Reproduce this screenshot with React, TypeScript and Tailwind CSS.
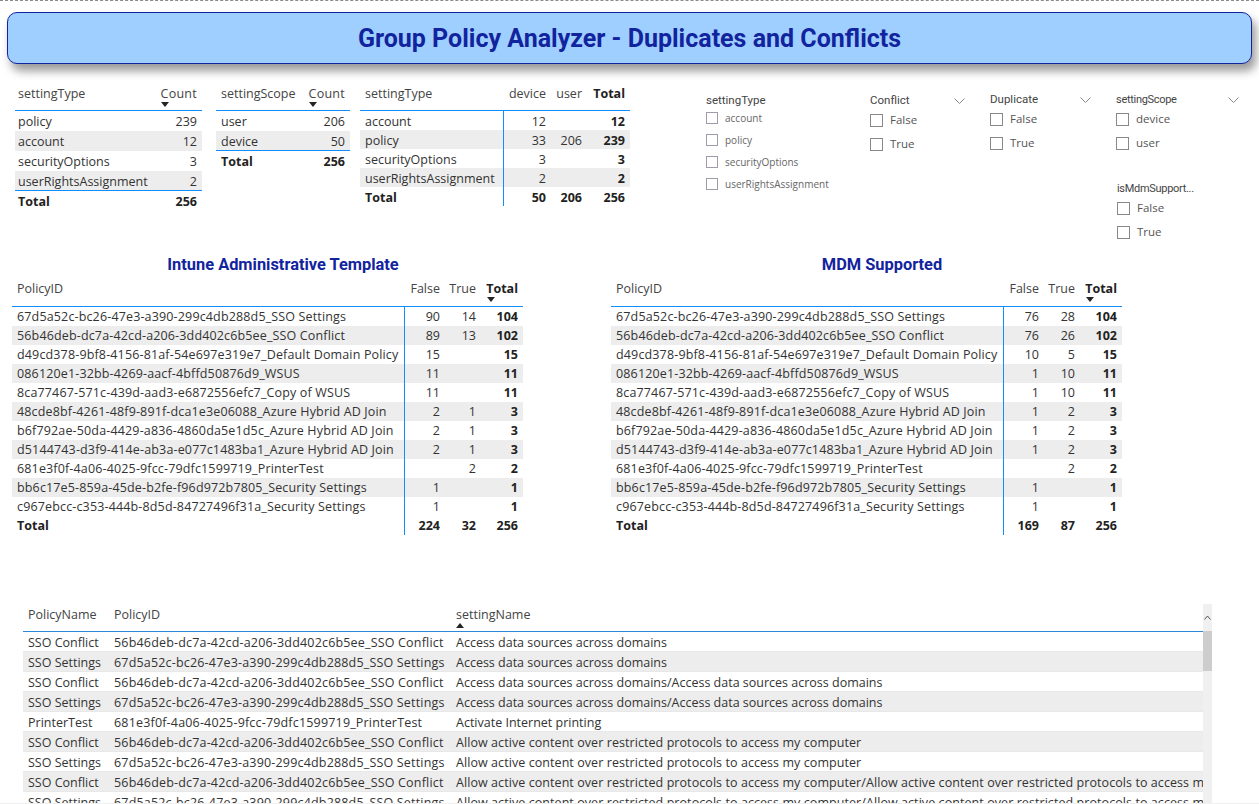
const sans = "font-['Open_Sans','Liberation_Sans',sans-serif]"

function SortArrow({ up }: { up?: boolean }) {
  return (
    <svg width="8" height="5" viewBox="0 0 8 5" className="absolute left-0 top-[17px]">
      <path d={up ? 'M0 5 L4 0 L8 5 Z' : 'M0 0 L4 5 L8 0 Z'} fill="#252423" />
    </svg>
  )
}

function Chevron() {
  return (
    <svg width="11" height="6" viewBox="0 0 11 6" fill="none" stroke="#8a8886" strokeWidth="1">
      <path d="M0.5 0.5 L5.5 5.5 L10.5 0.5" />
    </svg>
  )
}

function SmallList({ title, items }: { title: string; items: string[] }) {
  return (
    <div className="ml-[76px] w-[164px] pt-[10px]">
      <div className="h-[15px] font-['Roboto',sans-serif] text-[11.5px] leading-[16px] text-[#444]">{title}</div>
      {items.map((item) => (
        <div key={item} className="h-[22px] flex items-center gap-[7px] text-[10px] text-[#666]">
          <span className="w-[12px] h-[12px] border border-[#a09aa9] shrink-0" />
          <span>{item}</span>
        </div>
      ))}
    </div>
  )
}

function Slicer({ title, items, chevron, width, titleClass = 'text-[11.5px]' }: { title: string; items: string[]; chevron?: boolean; width?: string; titleClass?: string }) {
  return (
    <div className={width}>
      <div className={`h-[18px] flex items-center justify-between font-['Roboto',sans-serif] text-[#444] ${titleClass}`}>
        <span>{title}</span>
        {chevron && <Chevron />}
      </div>
      <div className="-mt-[2px]">
        {items.map((item) => (
          <div key={item} className="h-[24px] flex items-center gap-[7px] text-[11.5px] text-[#555]">
            <span className="w-[13px] h-[13px] border border-[#8a8886] shrink-0" />
            <span>{item}</span>
          </div>
        ))}
      </div>
    </div>
  )
}

function SimpleTable({ width, first, rows, pad }: { width: string; first: string; rows: [string, string][]; pad: string }) {
  return (
    <div className={`${width} text-[12.5px] text-[#333]`}>
      <div className={`h-[29px] border-b border-[#118dff] flex justify-between ${pad} pr-[5px] pt-[3px] text-[#444] leading-[18px]`}>
        <span>{first}</span>
        <span className="relative tracking-[0.25px]">Count<SortArrow /></span>
      </div>
      {rows.map(([k, v], i) => (
        <div key={k} className={`h-[20px] flex justify-between items-center ${pad} pr-[5px] ${i % 2 ? 'bg-[#ededed]' : ''} ${i === rows.length - 1 ? 'border-b border-[#118dff] pt-[3px]' : 'pt-[2px]'}`}>
          <span>{k}</span>
          <span>{v}</span>
        </div>
      ))}
      <div className={`h-[20px] flex justify-between items-center pt-[2px] ${pad} pr-[5px] font-bold text-[#222]`}>
        <span>Total</span>
        <span>256</span>
      </div>
    </div>
  )
}

const scopeRows = [
  ['account', '12', '', '12'],
  ['policy', '33', '206', '239'],
  ['securityOptions', '3', '', '3'],
  ['userRightsAssignment', '2', '', '2'],
]

function ScopeMatrix() {
  return (
    <div className="ml-[10px] w-[270px] text-[12.5px] text-[#333]">
      <div className="h-[29px] border-b border-[#118dff] flex px-[5px] pt-[3px] leading-[18px] text-[#444]">
        <span className="w-[138px]">settingType</span>
        <span className="w-[43px] text-right">device</span>
        <span className="w-[36px] text-right">user</span>
        <span className="w-[43px] text-right font-bold text-[#222]">Total</span>
      </div>
      <div className="relative">
        <div className="absolute left-[143px] top-0 bottom-0 w-px bg-[#118dff]" />
        {scopeRows.map((r, i) => (
          <div key={r[0]} className={`h-[19px] flex items-center pt-[3px] px-[5px] ${i % 2 ? 'bg-[#ededed]' : ''}`}>
            <span className="w-[138px]">{r[0]}</span>
            <span className="w-[43px] text-right">{r[1]}</span>
            <span className="w-[36px] text-right">{r[2]}</span>
            <span className="w-[43px] text-right font-bold text-[#222]">{r[3]}</span>
          </div>
        ))}
        <div className="h-[19px] flex items-center pt-[3px] px-[5px] font-bold text-[#222]">
          <span className="w-[138px]">Total</span>
          <span className="w-[43px] text-right">50</span>
          <span className="w-[36px] text-right">206</span>
          <span className="w-[43px] text-right">256</span>
        </div>
      </div>
    </div>
  )
}

const ids = [
  '67d5a52c-bc26-47e3-a390-299c4db288d5_SSO Settings',
  '56b46deb-dc7a-42cd-a206-3dd402c6b5ee_SSO Conflict',
  'd49cd378-9bf8-4156-81af-54e697e319e7_Default Domain Policy',
  '086120e1-32bb-4269-aacf-4bffd50876d9_WSUS',
  '8ca77467-571c-439d-aad3-e6872556efc7_Copy of WSUS',
  '48cde8bf-4261-48f9-891f-dca1e3e06088_Azure Hybrid AD Join',
  'b6f792ae-50da-4429-a836-4860da5e1d5c_Azure Hybrid AD Join',
  'd5144743-d3f9-414e-ab3a-e077c1483ba1_Azure Hybrid AD Join',
  '681e3f0f-4a06-4025-9fcc-79dfc1599719_PrinterTest',
  'bb6c17e5-859a-45de-b2fe-f96d972b7805_Security Settings',
  'c967ebcc-c353-444b-8d5d-84727496f31a_Security Settings',
]
const totals = ['104', '102', '15', '11', '11', '3', '3', '3', '2', '1', '1']
const intune = [['90', '14'], ['89', '13'], ['15', ''], ['11', ''], ['11', ''], ['2', '1'], ['2', '1'], ['2', '1'], ['', '2'], ['1', ''], ['1', '']]
const mdm = [['76', '28'], ['76', '26'], ['10', '5'], ['1', '10'], ['1', '10'], ['1', '2'], ['1', '2'], ['1', '2'], ['', '2'], ['1', ''], ['1', '']]

function PolicyMatrix({ title, counts, sums, className }: { title: string; counts: string[][]; sums: string[]; className: string }) {
  return (
    <div className={`w-[511px] text-[12.5px] text-[#333] ${className}`}>
      <div className="h-[24px] pl-[31px] text-center font-['Roboto',sans-serif] font-bold text-[16.4px] leading-[24px] text-[#12239e]">{title}</div>
      <div className="h-[30px] border-b border-[#118dff] flex items-start px-[5px] pt-[3px] text-[#444] leading-[18px]">
        <span className="w-[388px]">PolicyID</span>
        <span className="w-[35px] text-right">False</span>
        <span className="w-[36px] text-right">True</span>
        <span className="w-[42px] text-right font-bold text-[#222] relative">
          Total
          <span className="absolute left-[11px] top-0 w-[8px]"><SortArrow /></span>
        </span>
      </div>
      <div className="relative">
        <div className="absolute left-[392px] top-0 bottom-0 w-px bg-[#118dff]" />
        {ids.map((id, i) => (
          <div key={id} className={`h-[19px] flex items-center pt-[2px] px-[5px] ${i % 2 ? 'bg-[#ededed]' : ''}`}>
            <span className="w-[388px] whitespace-nowrap tracking-[0.15px]">{id}</span>
            <span className="w-[35px] text-right">{counts[i][0]}</span>
            <span className="w-[36px] text-right">{counts[i][1]}</span>
            <span className="w-[42px] text-right font-bold text-[#222]">{totals[i]}</span>
          </div>
        ))}
        <div className="h-[19px] flex items-center pt-[2px] px-[5px] font-bold text-[#222]">
          <span className="w-[388px]">Total</span>
          <span className="w-[35px] text-right">{sums[0]}</span>
          <span className="w-[36px] text-right">{sums[1]}</span>
          <span className="w-[42px] text-right">256</span>
        </div>
      </div>
    </div>
  )
}

const conflict = ['SSO Conflict', '56b46deb-dc7a-42cd-a206-3dd402c6b5ee_SSO Conflict']
const settings = ['SSO Settings', '67d5a52c-bc26-47e3-a390-299c4db288d5_SSO Settings']
const printer = ['PrinterTest', '681e3f0f-4a06-4025-9fcc-79dfc1599719_PrinterTest']
const a1 = 'Access data sources across domains'
const a2 = 'Access data sources across domains/Access data sources across domains'
const b1 = 'Allow active content over restricted protocols to access my computer'
const b2 = 'Allow active content over restricted protocols to access my computer/Allow active content over restricted protocols to access my computer'
const detail = [
  [...conflict, a1],
  [...settings, a1],
  [...conflict, a2],
  [...settings, a2],
  [...printer, 'Activate Internet printing'],
  [...conflict, b1],
  [...settings, b1],
  [...conflict, b2],
  [...settings, b2],
]

function DetailTable() {
  return (
    <div className="ml-[23px] mt-[69px] flex h-[199px] overflow-hidden text-[12.5px] text-[#333]">
      <div className="w-[1180px]">
        <div className="h-[28px] border-b border-[#2b88d8] flex px-[5px] pt-[2px] leading-[18px] text-[#444]">
          <span className="w-[86px]">PolicyName</span>
          <span className="w-[342px]">PolicyID</span>
          <span className="relative">settingName<SortArrow up /></span>
        </div>
        {detail.map((r, i) => (
          <div key={i} className={`h-[20px] flex items-center pt-[3px] px-[5px] whitespace-nowrap overflow-hidden border-b border-[#e8e8e8] ${i % 2 ? 'bg-[#ededed]' : ''}`}>
            <span className="w-[86px] shrink-0">{r[0]}</span>
            <span className="w-[342px] shrink-0 tracking-[0.18px]">{r[1]}</span>
            <span className={r[2].startsWith('Allow') ? 'tracking-[0.07px]' : ''}>{r[2]}</span>
          </div>
        ))}
      </div>
      <div className="w-[9px] bg-[#f0f0f0]">
        <div className="h-[27px] flex items-center justify-center">
          <svg width="7" height="5" viewBox="0 0 7 5" fill="none" stroke="#555" strokeWidth="1">
            <path d="M0.5 4.5 L3.5 1 L6.5 4.5" />
          </svg>
        </div>
        <div className="h-[40px] bg-[#cdcdcd]" />
      </div>
    </div>
  )
}

export default function App() {
  return (
    <div className={`w-[1259px] h-[804px] overflow-hidden bg-white ${sans}`}>
      <div className="h-0 border-t border-dashed border-[#8a8a8a]" />

      <div className="ml-[7px] mt-[11px] w-[1245px] h-[52px] pt-px rounded-[10px] border border-[#12239e] bg-[#9fcfff] shadow-[4px_7px_10px_rgba(0,0,0,0.4)] flex items-center justify-center font-['Roboto',sans-serif] font-bold text-[25px] text-[#12239e]">
        Group Policy Analyzer - Duplicates and Conflicts
      </div>

      <div className="flex mt-[18px] h-[171px]">
        <div className="ml-[15px]">
          <SimpleTable width="w-[187px]" first="settingType" pad="pl-[3px]"
            rows={[['policy', '239'], ['account', '12'], ['securityOptions', '3'], ['userRightsAssignment', '2']]} />
        </div>
        <div className="ml-[14px]">
          <SimpleTable width="w-[134px]" first="settingScope" pad="pl-[5px]"
            rows={[['user', '206'], ['device', '50']]} />
        </div>
        <ScopeMatrix />
        <SmallList title="settingType" items={['account', 'policy', 'securityOptions', 'userRightsAssignment']} />
        <div className="pt-[10px]">
          <Slicer title="Conflict" items={['False', 'True']} chevron width="w-[95px]" />
        </div>
        <div className="ml-[25px] pt-[9px]">
          <Slicer title="Duplicate" items={['False', 'True']} chevron width="w-[101px]" />
        </div>
        <div className="ml-[25px] pt-[9px] flex flex-col gap-[25px]">
          <Slicer title="settingScope" items={['device', 'user']} chevron width="w-[123px]" titleClass="text-[11px] tracking-[-0.3px]" />
          <div className="ml-px">
            <Slicer title="isMdmSupport..." items={['False', 'True']} width="w-[90px]" titleClass="text-[11px] tracking-[-0.3px]" />
          </div>
        </div>
      </div>

      <div className="flex ml-[12px]">
        <PolicyMatrix title="Intune Administrative Template" counts={intune} sums={['224', '32']} className="" />
        <PolicyMatrix title="MDM Supported" counts={mdm} sums={['169', '87']} className="ml-[88px]" />
      </div>

      <DetailTable />
      <div className="h-px bg-[#f0f0f0]" />
    </div>
  )
}
